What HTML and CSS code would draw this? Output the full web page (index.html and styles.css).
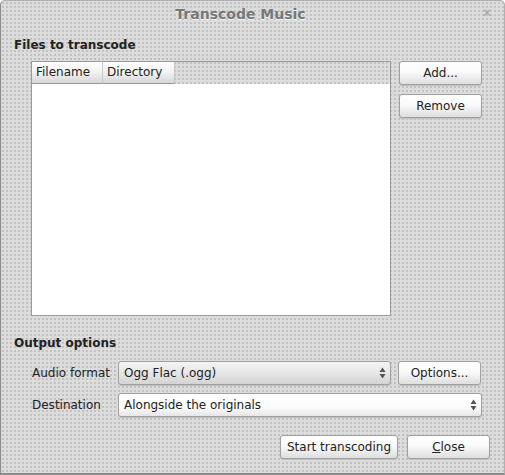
FILE: index.html
```html
<!DOCTYPE html>
<html lang="en">
<head>
<meta charset="UTF-8">
<title>Transcode Music</title>
<link rel="stylesheet" href="styles.css">
</head>
<body>

<div class="window">
    <div class="titlebar">
        <span class="title">Transcode Music</span>
        <span class="close-x">&#x2715;</span>
    </div>

    <div class="content">
        <div class="heading">Files to transcode</div>
        <div class="files">
            <div class="list">
                <div class="list-header">
                    <div class="col col-name">Filename</div>
                    <div class="col col-dir">Directory</div>
                </div>
                <div class="list-body"></div>
            </div>
            <div class="side-buttons">
                <button class="button">Add...</button>
                <button class="button">Remove</button>
            </div>
        </div>

        <div class="heading heading-output">Output options</div>
        <div class="form-row">
            <div class="label">Audio format</div>
            <div class="combo combo-gray">
                <span>Ogg Flac (.ogg)</span>
                <svg class="arrows" width="7" height="12" viewBox="0 0 7 12"><path d="M3.5 0.5 L6.5 5 L0.5 5 Z M0.5 7 L6.5 7 L3.5 11.5 Z" fill="#555"/></svg>
            </div>
            <button class="button options-button">Options...</button>
        </div>
        <div class="form-row">
            <div class="label">Destination</div>
            <div class="combo combo-white combo-wide">
                <span>Alongside the originals</span>
                <svg class="arrows" width="7" height="12" viewBox="0 0 7 12"><path d="M3.5 0.5 L6.5 5 L0.5 5 Z M0.5 7 L6.5 7 L3.5 11.5 Z" fill="#555"/></svg>
            </div>
        </div>

        <div class="bottom-buttons">
            <button class="button start-button">Start transcoding</button>
            <button class="button close-button"><u>C</u>lose</button>
        </div>
    </div>
</div>

</body>
</html>
```

FILE: styles.css
```css
body {
    margin: 0;
    padding: 0;
    font-family: "DejaVu Sans", sans-serif;
    font-size: 12px;
    color: #222222;
}
.window {
    width: 505px;
    height: 475px;
    box-sizing: border-box;
    border-left: 1px solid #8a8a8a;
    border-right: 1px solid #b0b0b0;
    border-top: 1px solid #b0b0b0;
    border-bottom: 2px solid #8a8a8a;
    border-top-left-radius: 5px;
    border-top-right-radius: 5px;
    background-color: #dcdcdc;
    background-image: radial-gradient(#c2c2c2 0.9px, transparent 1.1px);
    background-size: 4px 4px;
    overflow: hidden;
}
.titlebar {
    height: 25px;
    position: relative;
    display: flex;
    justify-content: center;
    align-items: center;
    padding-right: 24px;
}
.title {
    font-weight: bold;
    font-size: 14px;
    color: #777777;
    text-shadow: 0 1px 0 #f4f4f4;
}
.close-x {
    position: absolute;
    right: 12px;
    top: 5px;
    font-size: 12px;
    font-weight: bold;
    color: #a8a8a8;
}
.content {
    padding: 0 14px 0 13px;
}
.heading {
    font-weight: bold;
    font-size: 12px;
    line-height: 16px;
    margin-top: 11px;
}
.heading-output {
    margin-top: 19px;
}
.files {
    display: flex;
    margin-top: 8px;
    margin-left: 17px;
    gap: 8px;
}
.list {
    width: 360px;
    height: 255px;
    box-sizing: border-box;
    border: 1px solid #9a9a9a;
    display: flex;
    flex-direction: column;
}
.list-header {
    height: 22px;
    display: flex;
    flex: none;
}
.col {
    box-sizing: border-box;
    height: 22px;
    padding: 3px 4px 0 4px;
    background: linear-gradient(#ffffff, #f2f2f2 50%, #d6d6d6);
    border-right: 1px solid #c8c8c8;
    border-bottom: 1px solid #9a9a9a;
}
.col-name {
    width: 71px;
}
.col-dir {
    width: 72px;
}
.list-body {
    flex: 1;
    background-color: #ffffff;
}
.side-buttons {
    display: flex;
    flex-direction: column;
    gap: 9px;
    padding-top: 0;
}
.button {
    font-family: "DejaVu Sans", sans-serif;
    font-size: 12px;
    color: #222222;
    width: 83px;
    height: 24px;
    padding: 0;
    border: 1px solid #a0a0a0;
    border-radius: 3px;
    background: linear-gradient(#ffffff, #fafafa 45%, #dedede);
    box-shadow: 0 1px 0 #c0c0c0;
}
.button u {
    text-decoration: underline;
}
.form-row {
    display: flex;
    align-items: center;
    margin-left: 18px;
    margin-top: 8px;
}
.heading-output + .form-row {
    margin-top: 10px;
}
.label {
    width: 86px;
}
.combo {
    box-sizing: border-box;
    height: 24px;
    width: 273px;
    border: 1px solid #a0a0a0;
    border-radius: 3px;
    display: flex;
    align-items: center;
    justify-content: space-between;
    padding: 0 4px 0 5px;
    box-shadow: 0 1px 0 #c0c0c0;
}
.combo-gray {
    background: linear-gradient(#f4f4f4, #e6e6e6 50%, #d4d4d4);
}
.combo-white {
    background: linear-gradient(#ffffff, #fbfbfb 60%, #e6e6e6);
}
.combo-wide {
    width: 364px;
}
.options-button {
    margin-left: 7px;
}
.bottom-buttons {
    display: flex;
    justify-content: flex-end;
    gap: 9px;
    margin-top: 18px;
    margin-right: 0;
}
.start-button {
    width: 118px;
}
```
